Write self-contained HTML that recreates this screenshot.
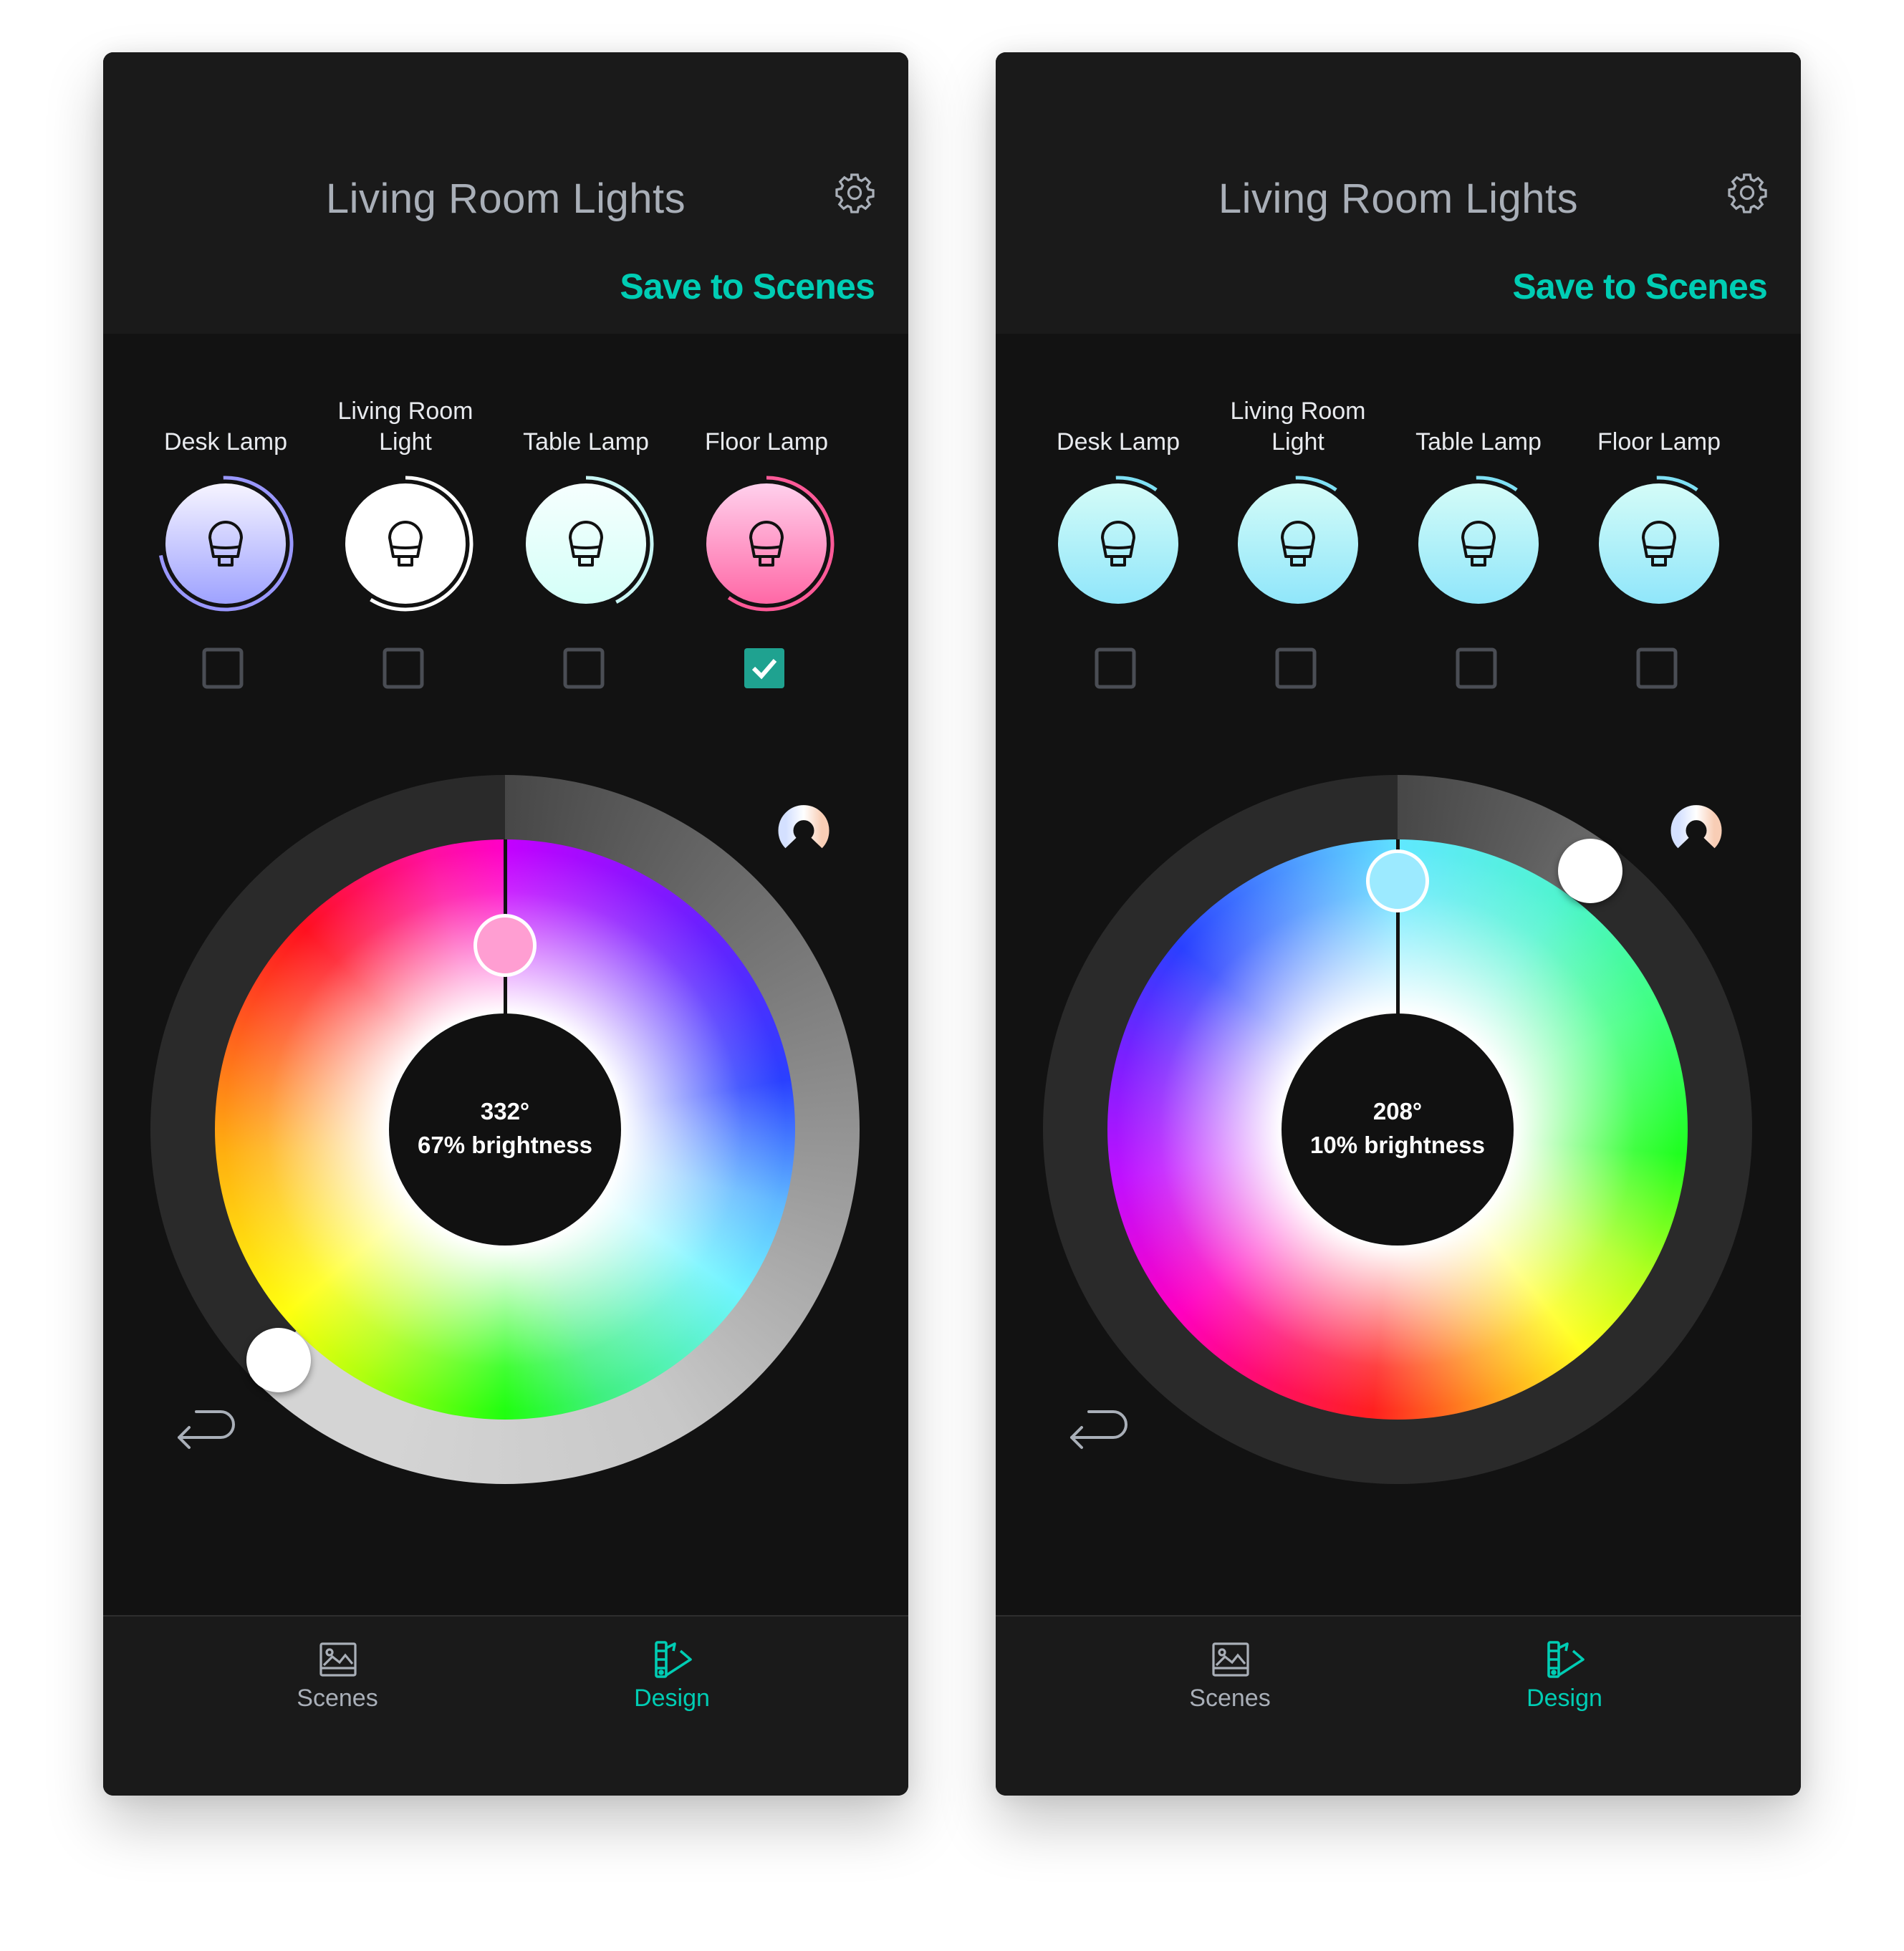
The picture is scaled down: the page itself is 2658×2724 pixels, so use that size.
<!DOCTYPE html>
<html><head><meta charset="utf-8">
<style>
*{margin:0;padding:0;box-sizing:border-box}
body{width:2658px;height:2724px;background:#fff;position:relative;overflow:hidden;font-family:"Liberation Sans",sans-serif}
.panel{position:absolute;top:73px;width:1124px;height:2434px;background:#121212;border-radius:14px;overflow:hidden;box-shadow:0 40px 80px rgba(0,0,0,0.22),0 0 30px rgba(0,0,0,0.08)}
.hdr{position:absolute;left:0;top:0;width:1124px;height:393px;background:#1a1a1a}
.title{position:absolute;left:0;width:1124px;top:170px;text-align:center;color:#a9afb8;font-size:58px;line-height:70px;letter-spacing:0.5px}
.save{position:absolute;right:47px;top:296px;color:#00cdb4;font-size:50px;font-weight:bold;line-height:62px;letter-spacing:-0.8px}
.lbl{position:absolute;width:240px;text-align:center;color:#e8eaee;font-size:34px;line-height:43px}
.nav{position:absolute;left:0;top:2182px;width:1124px;height:252px;background:#1a1a1a;border-top:2px solid #2e2e2e}
.nl{position:absolute;width:300px;text-align:center;font-size:34px;top:95px}
.ring{position:absolute;left:66px;top:1009px;width:990px;height:990px;border-radius:50%}
.wheel{position:absolute;left:156px;top:1099px;width:810px;height:810px;border-radius:50%}
.wheel .w{position:absolute;inset:0;border-radius:50%;background:radial-gradient(circle closest-side,#fff 40%,rgba(255,255,255,0.55) 62%,rgba(255,255,255,0.15) 82%,rgba(255,255,255,0) 97%)}
.blk{position:absolute;left:399px;top:1342px;width:324px;height:324px;border-radius:50%;background:#111}
.ctext{position:absolute;left:399px;width:324px;text-align:center;color:#fff;font-size:33px;font-weight:bold;line-height:47px;top:1455px}
.line{position:absolute;left:559px;width:5px;background:#111}
.knob{position:absolute;width:90px;height:90px;border-radius:50%;background:#fff;box-shadow:0 4px 10px rgba(0,0,0,0.4)}
.handle{position:absolute;width:88px;height:88px;border-radius:50%;border:5px solid #fff}
</style></head><body>

<!-- PANEL 1 -->
<div class="panel" style="left:144px">
 <div class="hdr"></div>
 <div class="title">Living Room Lights</div>
 <svg style="position:absolute;left:1019px;top:166px" width="60" height="60" viewBox="0 0 24 24" fill="none" stroke="#a9afb8" stroke-width="1.3"><path d="M10.3 2h3.4l.5 2.6 1.7.8 2.2-1.5 2.4 2.4-1.5 2.2.8 1.7 2.6.5v3.4l-2.6.5-.8 1.7 1.5 2.2-2.4 2.4-2.2-1.5-1.7.8-.5 2.6h-3.4l-.5-2.6-1.7-.8-2.2 1.5-2.4-2.4 1.5-2.2-.8-1.7L2 13.7v-3.4l2.6-.5.8-1.7-1.5-2.2 2.4-2.4 2.2 1.5 1.7-.8z"/><circle cx="12" cy="12" r="3.4"/></svg>
 <div class="save">Save to Scenes</div>

 <div class="lbl" style="left:51px;top:523px">Desk Lamp</div>
 <div class="lbl" style="left:302px;top:480px">Living Room<br>Light</div>
 <div class="lbl" style="left:554px;top:523px">Table Lamp</div>
 <div class="lbl" style="left:806px;top:523px">Floor Lamp</div>

 <svg style="position:absolute;left:0;top:580px" width="1124" height="220">
  <defs>
   <linearGradient id="g1" x1="0" y1="0" x2="0" y2="1"><stop offset="0" stop-color="#f6f4ff"/><stop offset="1" stop-color="#9ea2ff"/></linearGradient>
   <linearGradient id="g3" x1="0" y1="0" x2="0" y2="1"><stop offset="0" stop-color="#f6fffe"/><stop offset="1" stop-color="#d4fff8"/></linearGradient>
   <linearGradient id="g4" x1="0" y1="0" x2="0" y2="1"><stop offset="0" stop-color="#ffd0ec"/><stop offset="1" stop-color="#ff68a6"/></linearGradient>
   <g id="bulb" fill="none" stroke="#111" stroke-width="4" stroke-linejoin="round"><path d="M-22 -8 A22 22 0 0 1 22 -8 L17 18 L-17 18 Z"/><path d="M-21 4 Q0 8 21 4"/><path d="M-9 18 V30 H9 V18"/></g>
  </defs>
  <g transform="translate(171,106)"><circle r="84" fill="url(#g1)"/><circle r="92" fill="none" stroke="#9a98ff" stroke-width="5" stroke-dasharray="420 600" transform="rotate(-92)"/><use href="#bulb"/></g>
  <g transform="translate(422,106)"><circle r="84" fill="#fff"/><circle r="92" fill="none" stroke="#fff" stroke-width="5" stroke-dasharray="340 600" transform="rotate(-90)"/><use href="#bulb"/></g>
  <g transform="translate(674,106)"><circle r="84" fill="url(#g3)"/><circle r="92" fill="none" stroke="#c8f6f4" stroke-width="5" stroke-dasharray="245 600" transform="rotate(-90)"/><use href="#bulb"/></g>
  <g transform="translate(926,106)"><circle r="84" fill="url(#g4)"/><circle r="92" fill="none" stroke="#ff5a98" stroke-width="5" stroke-dasharray="345 600" transform="rotate(-90)"/><use href="#bulb"/></g>
 </svg>

 <svg style="position:absolute;left:0;top:830px" width="1124" height="60">
  <g fill="none" stroke="#4a4d54" stroke-width="5"><rect x="141" y="4" width="52" height="52" rx="4"/><rect x="393" y="4" width="52" height="52" rx="4"/><rect x="645" y="4" width="52" height="52" rx="4"/></g>
  <rect x="895" y="2" width="56" height="56" rx="4" fill="#1fa290"/><path d="M908 30 L919 41 L938 19" fill="none" stroke="#fff" stroke-width="6"/>
 </svg>

 <div class="ring" style="background:conic-gradient(#474747 0deg,#8a8a8a 80deg,#c8c8c8 150deg,#d4d4d4 200deg,#d4d4d4 226deg,#2a2a2a 226deg,#2a2a2a 360deg)"></div>
 <div class="wheel" style="background:conic-gradient(#c400ff 0deg,#6a20ff 45deg,#2a40ff 80deg,#60b8ff 105deg,#70f4ff 125deg,#40f080 160deg,#20ff10 180deg,#b0ff10 210deg,#ffff10 230deg,#ffb010 265deg,#ff5020 295deg,#ff1020 315deg,#ff10a0 345deg,#ff00c8 360deg)"><div class="w"></div></div>
 <div class="line" style="top:1099px;height:250px"></div>
 <div class="blk"></div>
 <div class="ctext">332°<br>67% brightness</div>
 <div class="handle" style="left:517px;top:1203px;background:#ff9ed2"></div>
 <div class="knob" style="left:200px;top:1781px"></div>

 <svg style="position:absolute;left:940px;top:1048px" width="76" height="76" viewBox="-38 -38 76 76"><defs><linearGradient id="ic" x1="0" x2="1"><stop offset="0" stop-color="#d4e0ff"/><stop offset="0.5" stop-color="#fff"/><stop offset="1" stop-color="#f8cdb5"/></linearGradient></defs><path d="M-18 18 A25 25 0 1 1 18 18" fill="none" stroke="url(#ic)" stroke-width="21"/></svg>
 <svg style="position:absolute;left:100px;top:1890px" width="90" height="70" viewBox="0 0 90 70" fill="none" stroke="#a9afb8" stroke-width="4" stroke-linecap="round" stroke-linejoin="round"><path d="M30 8 H64 A18 18 0 0 1 64 44 H6"/><path d="M20 30 L6 44 L20 58"/></svg>

 <div class="nav">
  <svg style="position:absolute;left:300px;top:32px" width="56" height="56" viewBox="0 0 28 28" fill="none" stroke="#a9afb8" stroke-width="1.6"><rect x="2" y="3" width="24" height="22" rx="1"/><path d="M2 20 H26"/><circle cx="8" cy="9" r="2"/><path d="M4 18 L10 12 L15 16 L19 11 L24 17"/></svg>
  <div class="nl" style="left:177px;color:#a9afb8">Scenes</div>
  <svg style="position:absolute;left:766px;top:30px" width="60" height="60" viewBox="0 0 30 30" fill="none" stroke="#00cdb4" stroke-width="1.8" stroke-linejoin="round"><rect x="3" y="3" width="7" height="24" rx="1"/><path d="M3 9H10M3 15H10M3 21H10"/><path d="M10 7 L16 4 L15 9"/><path d="M10 26 L27 15 L20 9"/><circle cx="6.5" cy="24" r="1" fill="#00cdb4"/></svg>
  <div class="nl" style="left:644px;color:#00cdb4">Design</div>
 </div>
</div>

<!-- PANEL 2 -->
<div class="panel" style="left:1390px">
 <div class="hdr"></div>
 <div class="title">Living Room Lights</div>
 <svg style="position:absolute;left:1019px;top:166px" width="60" height="60" viewBox="0 0 24 24" fill="none" stroke="#a9afb8" stroke-width="1.3"><path d="M10.3 2h3.4l.5 2.6 1.7.8 2.2-1.5 2.4 2.4-1.5 2.2.8 1.7 2.6.5v3.4l-2.6.5-.8 1.7 1.5 2.2-2.4 2.4-2.2-1.5-1.7.8-.5 2.6h-3.4l-.5-2.6-1.7-.8-2.2 1.5-2.4-2.4 1.5-2.2-.8-1.7L2 13.7v-3.4l2.6-.5.8-1.7-1.5-2.2 2.4-2.4 2.2 1.5 1.7-.8z"/><circle cx="12" cy="12" r="3.4"/></svg>
 <div class="save">Save to Scenes</div>

 <div class="lbl" style="left:51px;top:523px">Desk Lamp</div>
 <div class="lbl" style="left:302px;top:480px">Living Room<br>Light</div>
 <div class="lbl" style="left:554px;top:523px">Table Lamp</div>
 <div class="lbl" style="left:806px;top:523px">Floor Lamp</div>

 <svg style="position:absolute;left:0;top:580px" width="1124" height="220">
  <defs>
   <linearGradient id="gc" x1="0" y1="0" x2="0" y2="1"><stop offset="0" stop-color="#d4fcf8"/><stop offset="1" stop-color="#90e6fa"/></linearGradient>
   <g id="bulb2" fill="none" stroke="#111" stroke-width="4" stroke-linejoin="round"><path d="M-22 -8 A22 22 0 0 1 22 -8 L17 18 L-17 18 Z"/><path d="M-21 4 Q0 8 21 4"/><path d="M-9 18 V30 H9 V18"/></g>
  </defs>
  <g transform="translate(171,106)"><circle r="84" fill="url(#gc)"/><circle r="92" fill="none" stroke="#7fe0f4" stroke-width="5" stroke-dasharray="60 600" transform="rotate(-92)"/><use href="#bulb2"/></g>
  <g transform="translate(422,106)"><circle r="84" fill="url(#gc)"/><circle r="92" fill="none" stroke="#7fe0f4" stroke-width="5" stroke-dasharray="60 600" transform="rotate(-92)"/><use href="#bulb2"/></g>
  <g transform="translate(674,106)"><circle r="84" fill="url(#gc)"/><circle r="92" fill="none" stroke="#7fe0f4" stroke-width="5" stroke-dasharray="60 600" transform="rotate(-92)"/><use href="#bulb2"/></g>
  <g transform="translate(926,106)"><circle r="84" fill="url(#gc)"/><circle r="92" fill="none" stroke="#7fe0f4" stroke-width="5" stroke-dasharray="60 600" transform="rotate(-92)"/><use href="#bulb2"/></g>
 </svg>

 <svg style="position:absolute;left:0;top:830px" width="1124" height="60">
  <g fill="none" stroke="#4a4d54" stroke-width="5"><rect x="141" y="4" width="52" height="52" rx="4"/><rect x="393" y="4" width="52" height="52" rx="4"/><rect x="645" y="4" width="52" height="52" rx="4"/><rect x="897" y="4" width="52" height="52" rx="4"/></g>
 </svg>

 <div class="ring" style="background:conic-gradient(#474747 0deg,#5e5e5e 25deg,#6c6c6c 37deg,#2a2a2a 37deg,#2a2a2a 360deg)"></div>
 <div class="wheel" style="background:conic-gradient(#60e8ff 0deg,#50f4d0 35deg,#40ff80 65deg,#20ff20 95deg,#b0ff20 120deg,#ffff20 140deg,#ffa020 160deg,#ff2020 185deg,#ff1060 205deg,#ff00c0 230deg,#c010ff 260deg,#7a20ff 285deg,#2a40ff 310deg,#50a0ff 340deg,#60e0ff 360deg)"><div class="w"></div></div>
 <div class="line" style="top:1099px;height:250px"></div>
 <div class="blk"></div>
 <div class="ctext">208°<br>10% brightness</div>
 <div class="handle" style="left:517px;top:1113px;background:#9ceaff"></div>
 <div class="knob" style="left:785px;top:1098px"></div>

 <svg style="position:absolute;left:940px;top:1048px" width="76" height="76" viewBox="-38 -38 76 76"><defs><linearGradient id="ic2" x1="0" x2="1"><stop offset="0" stop-color="#d4e0ff"/><stop offset="0.5" stop-color="#fff"/><stop offset="1" stop-color="#f8cdb5"/></linearGradient></defs><path d="M-18 18 A25 25 0 1 1 18 18" fill="none" stroke="url(#ic2)" stroke-width="21"/></svg>
 <svg style="position:absolute;left:100px;top:1890px" width="90" height="70" viewBox="0 0 90 70" fill="none" stroke="#a9afb8" stroke-width="4" stroke-linecap="round" stroke-linejoin="round"><path d="M30 8 H64 A18 18 0 0 1 64 44 H6"/><path d="M20 30 L6 44 L20 58"/></svg>

 <div class="nav">
  <svg style="position:absolute;left:300px;top:32px" width="56" height="56" viewBox="0 0 28 28" fill="none" stroke="#a9afb8" stroke-width="1.6"><rect x="2" y="3" width="24" height="22" rx="1"/><path d="M2 20 H26"/><circle cx="8" cy="9" r="2"/><path d="M4 18 L10 12 L15 16 L19 11 L24 17"/></svg>
  <div class="nl" style="left:177px;color:#a9afb8">Scenes</div>
  <svg style="position:absolute;left:766px;top:30px" width="60" height="60" viewBox="0 0 30 30" fill="none" stroke="#00cdb4" stroke-width="1.8" stroke-linejoin="round"><rect x="3" y="3" width="7" height="24" rx="1"/><path d="M3 9H10M3 15H10M3 21H10"/><path d="M10 7 L16 4 L15 9"/><path d="M10 26 L27 15 L20 9"/><circle cx="6.5" cy="24" r="1" fill="#00cdb4"/></svg>
  <div class="nl" style="left:644px;color:#00cdb4">Design</div>
 </div>
</div>
</body></html>
